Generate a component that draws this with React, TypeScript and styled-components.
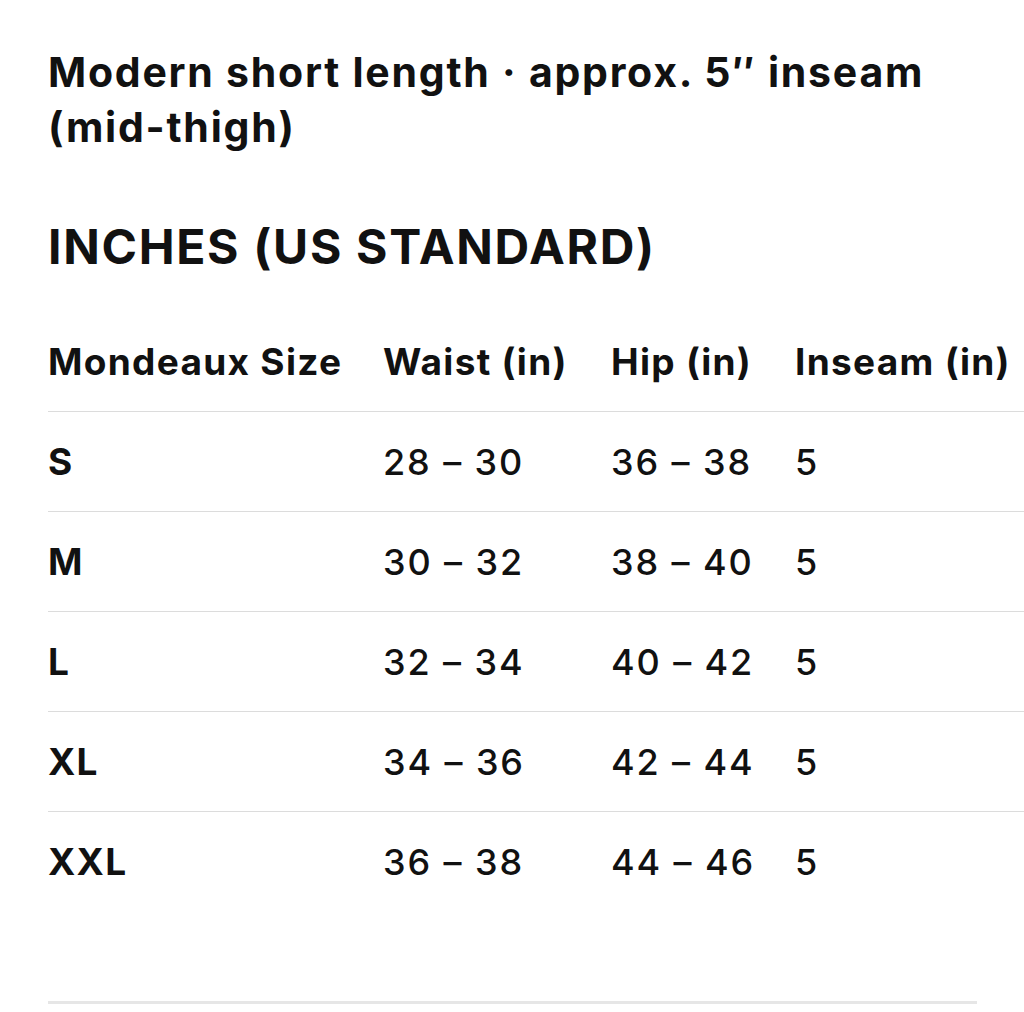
import React from 'react';
import styled, { createGlobalStyle } from 'styled-components';

const GlobalStyle = createGlobalStyle`
  html, body {
    margin: 0;
    padding: 0;
    background: #ffffff;
  }
  body {
    font-family: Inter, "Noto Sans", "Liberation Sans", sans-serif;
    color: #111111;
    overflow: hidden;
  }
`;

const Page = styled.div`
  width: 1024px;
  height: 1012px;
  overflow: hidden;
  padding: 45px 0 0 48px;
  box-sizing: border-box;
`;

const Subtitle = styled.p`
  margin: 0;
  font-size: 41px;
  font-weight: 700;
  line-height: 55px;
  letter-spacing: 1.75px;
  width: 950px;
`;

const Heading = styled.h2`
  margin: 64px 0 0;
  font-size: 48px;
  font-weight: 700;
  line-height: 56px;
  letter-spacing: 1.7px;
`;

const TableWrap = styled.div`
  margin-top: 37px;
  width: 1000px;
`;

const Row = styled.div<{ $last?: boolean }>`
  display: grid;
  grid-template-columns: 335px 228px 184px 1fr;
  align-items: center;
  height: 100px;
  border-bottom: ${(p) => (p.$last ? 'none' : '1.5px solid #dcdcdc')};
  box-sizing: border-box;
`;

const Cell = styled.div<{ $bold?: boolean }>`
  font-size: ${(p) => (p.$bold ? '37px' : '36px')};
  font-weight: ${(p) => (p.$bold ? 700 : 500)};
  line-height: 42px;
  white-space: nowrap;
  letter-spacing: ${(p) => (p.$bold ? '1.3px' : '1.9px')};
`;

const Rule = styled.hr`
  margin: 0;
  border: none;
  height: 3px;
  width: 929px;
  background: #e6e6e6;
`;

const Spacer = styled.div`
  height: 89px;
`;

type SizeRow = { size: string; waist: string; hip: string; inseam: string };

const rows: SizeRow[] = [
  { size: 'S', waist: '28 – 30', hip: '36 – 38', inseam: '5' },
  { size: 'M', waist: '30 – 32', hip: '38 – 40', inseam: '5' },
  { size: 'L', waist: '32 – 34', hip: '40 – 42', inseam: '5' },
  { size: 'XL', waist: '34 – 36', hip: '42 – 44', inseam: '5' },
  { size: 'XXL', waist: '36 – 38', hip: '44 – 46', inseam: '5' },
];

export default function App() {
  return (
    <Page>
      <GlobalStyle />
      <Subtitle>Modern short length · approx. 5″ inseam (mid-thigh)</Subtitle>
      <Heading>INCHES (US STANDARD)</Heading>
      <TableWrap>
        <Row>
          <Cell $bold>Mondeaux Size</Cell>
          <Cell $bold>Waist (in)</Cell>
          <Cell $bold>Hip (in)</Cell>
          <Cell $bold>Inseam (in)</Cell>
        </Row>
        {rows.map((r, i) => (
          <Row key={r.size} $last={i === rows.length - 1}>
            <Cell $bold>{r.size}</Cell>
            <Cell>{r.waist}</Cell>
            <Cell>{r.hip}</Cell>
            <Cell>{r.inseam}</Cell>
          </Row>
        ))}
      </TableWrap>
      <Spacer />
      <Rule />
    </Page>
  );
}
